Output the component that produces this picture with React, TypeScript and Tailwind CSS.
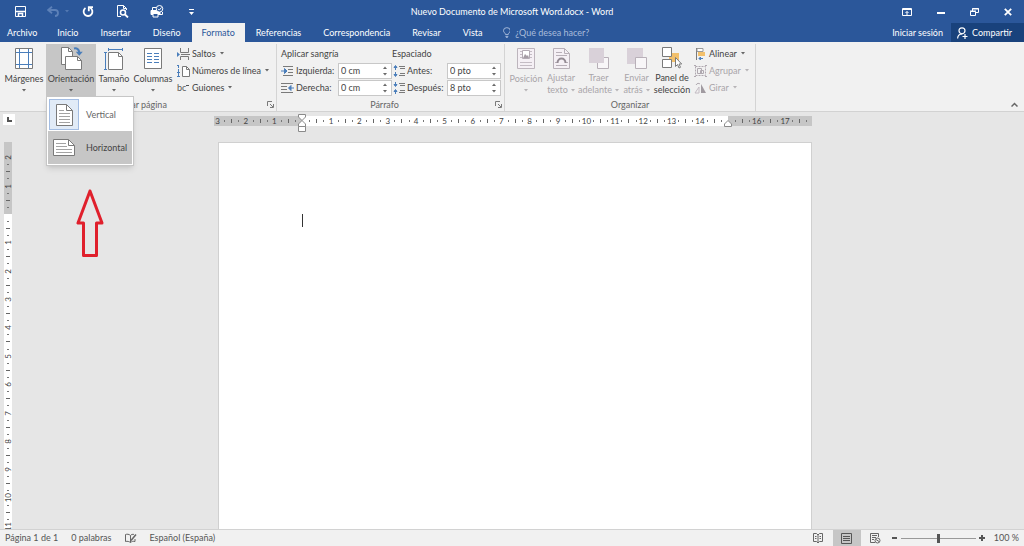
import type { ReactNode } from "react";

const GRAY = "#7a7a7a";
const BLUE = "#4a7ebb";

/* ---------- Ribbon icons ---------- */

const MarginsIcon = () => (
  <svg width="18" height="21" viewBox="0 0 18 21" fill="none">
    <path d="M.5.5h17v20H.5z" fill="#fff" stroke={GRAY} />
    <path d="M4.5 1v19M13.5 1v19M1 4.5h16M1 16.5h16" stroke={BLUE} />
  </svg>
);

const OrientationIcon = () => (
  <svg width="23" height="23" viewBox="0 0 23 23" fill="none">
    <path d="M1.5.5h7l4 4v13h-11z" fill="#fff" stroke={GRAY} />
    <path d="M8.5.5v4h4" stroke={GRAY} />
    <path d="M5.5 9.500h12l4 4v9h-16z" fill="#fff" stroke={GRAY} />
    <path d="M17.500 9.500v4h4" stroke={GRAY} />
    <path d="M14 1.500c3-.6 5 .8 5.400 4.500" stroke={BLUE} strokeWidth="2" />
    <path d="M15.800 4.800h7l-3.500 4z" fill={BLUE} />
  </svg>
);

const SizeIcon = () => (
  <svg width="20" height="22" viewBox="0 0 20 22" fill="none">
    <path d="M4.500 4.500h10l4 4v13h-14z" fill="#fff" stroke={GRAY} />
    <path d="M14.500 4.500v4h4" stroke={GRAY} />
    <path d="M1.500 4v18M0 4.500h3M0 21.500h3M4 1.500h15M4.500 0v3M18.500 0v3" stroke={BLUE} />
  </svg>
);

const ColumnsIcon = () => (
  <svg width="18" height="21" viewBox="0 0 18 21" fill="none">
    <path d="M.5.5h17v20H.5z" fill="#fff" stroke={GRAY} />
    <path
      d="M3 5.500h5M3 8.500h5M3 11.500h5M3 14.500h5M10 5.500h5M10 8.500h5M10 11.500h5M10 14.500h5"
      stroke={BLUE}
    />
  </svg>
);

const BreaksIcon = () => (
  <svg width="13" height="12" viewBox="0 0 13 12" fill="none">
    <path d="M3.500 0v4.500h8V0M3.500 12V8.500h8V12" stroke={GRAY} />
    <path d="M4 6.500h9" stroke={GRAY} />
    <path d="M0 4l3 2.500L0 9z" fill={BLUE} />
  </svg>
);

const LineNumbersIcon = () => (
  <svg width="13" height="12" viewBox="0 0 13 12" fill="none">
    <path d="M1.500 0v3M1.500 4v3M1.500 8v3M0 .5h1M0 11.500h3M0 7.500h3" stroke={BLUE} />
    <path d="M5.500 1.500h4l3 3v7h-7z" fill="#fff" stroke={GRAY} />
    <path d="M9.500 1.500v3h3" stroke={GRAY} />
  </svg>
);

const HyphenIcon = () => (
  <span aria-hidden className="flex w-[13px] items-center text-[9px] leading-3 text-[#555]">
    bc
    <span className="mb-[5px] h-px w-[3px] bg-[#555]" />
  </span>
);

const IndentIcon = ({ right = false }: { right?: boolean }) => (
  <svg width="13" height="12" viewBox="0 0 13 12" fill="none">
    <path
      d={right ? "M0 1.500h12M0 4.500h6M0 7.500h6M0 10.500h12" : "M2 1.500h10M7 4.500h5M7 7.500h5M2 10.500h10"}
      stroke={GRAY}
    />
    <path
      d={right ? "M13 6H8.500M10 3.500L7.500 6 10 8.500z" : "M0 6h4M3.500 3.500L6 6 3.500 8.500z"}
      fill={BLUE}
      stroke={BLUE}
    />
  </svg>
);

const SpacingIcon = ({ after = false }: { after?: boolean }) => (
  <svg width="12" height="12" viewBox="0 0 12 12" fill="none">
    <path d="M6 1.500h6M7 3.500h5M7 8.500h5M6 10.500h6" stroke={GRAY} />
    <path
      d={
        after
          ? "M2.500 0v2M2.500 12v-3M1 2.500h3l-1.500 2zM1 9.500h3l-1.500-2z"
          : "M2.500 5V2M2.500 7v3M1 2.500h3l-1.500-2zM1 9.500h3l-1.500 2z"
      }
      fill={BLUE}
      stroke={BLUE}
    />
  </svg>
);

const PositionIcon = () => (
  <svg width="18" height="21" viewBox="0 0 18 21" fill="none">
    <path d="M.5.5h17v20H.5z" fill="#f5f0f5" stroke="#bdb5bd" />
    <path d="M3 3.500h2M13 3.500h2M3 6.500h2M13 6.500h2M3 9.500h2M13 9.500h2M3 14.500h12M3 17.500h12" stroke="#c4bcc4" />
    <path d="M5.500 2.500h7v8h-7z" fill="#fff" stroke="#b3aab3" />
    <path d="M6 10l2-4 2 2 1-1 1 3z" fill="#a59ca5" />
  </svg>
);

const WrapIcon = () => (
  <svg width="17" height="21" viewBox="0 0 17 21" fill="none">
    <path d="M.5.5h11l5 5v15H.5z" fill="#f5f0f5" stroke="#b8b0b8" />
    <path d="M11.500.5v5h5" stroke="#b8b0b8" />
    <path d="M3 4.500h6M3 7.500h11M3 17.500h11M2 14.500h2M13 14.500h2" stroke="#b8b0b8" />
    <path d="M4.500 15c0-6 8-6 8 0" stroke="#948b94" strokeWidth="2" />
  </svg>
);

const BringForwardIcon = () => (
  <svg width="20" height="21" viewBox="0 0 20 21" fill="none">
    <path d="M8.500 9.500h11v11h-11z" fill="#f8f6f8" stroke="#b8b0b8" />
    <path d="M0 0h15v15H0z" fill="#d9d1d9" />
  </svg>
);

const SendBackwardIcon = () => (
  <svg width="20" height="21" viewBox="0 0 20 21" fill="none">
    <path d="M0 0h16v16H0z" fill="#d9d1d9" />
    <path d="M8.500 9.500h11v11h-11z" fill="#f8f6f8" stroke="#b8b0b8" />
  </svg>
);

const SelectionPaneIcon = () => (
  <svg width="20" height="22" viewBox="0 0 20 22" fill="none">
    <path d="M7 6h10v9H7z" fill="#f2c06c" />
    <path d="M.5.5h9v9h-9zM.5 12.500h9v8h-9z" fill="#fff" stroke={GRAY} />
    <path d="M13.500 10.500v9l2-2 1.500 3.500 1.500-.7-1.500-3.300h2.700z" fill="#fff" stroke={GRAY} />
  </svg>
);

const AlignIcon = () => (
  <svg width="13" height="12" viewBox="0 0 13 12" fill="none">
    <path d="M2.500 0v12" stroke={GRAY} />
    <path d="M3 .5h6v3H3z" stroke="#9a9a9a" fill="#fff" />
    <path d="M4 4h7v4H4z" fill="#f2c06c" />
    <path d="M9 10.500H5M6.500 9l-1.500 1.500L6.500 12z" stroke={BLUE} fill={BLUE} />
  </svg>
);

const GroupIcon = () => (
  <svg width="13" height="12" viewBox="0 0 13 12" fill="none" stroke="#b0a9b0">
    <path d="M1.500 1.500h10v9h-10z" strokeDasharray="2 1" />
    <path d="M3.500 3.500h4v5h-4zM6.500 5.500h3v3h-3z" />
    <path d="M0 .5h2M11 .5h2M0 11.500h2M11 11.500h2" />
  </svg>
);

const RotateIcon = () => (
  <svg width="13" height="12" viewBox="0 0 13 12" fill="none">
    <path d="M7 2v9h5z" fill="#a09aa0" />
    <path d="M5 5v6H1z" stroke="#c4bcc4" />
    <path d="M2 3c1-2 3-2 4-1" stroke="#b0a9b0" />
  </svg>
);

const LauncherIcon = () => (
  <svg width="7" height="7" viewBox="0 0 7 7" fill="none" stroke={GRAY}>
    <path d="M.5 5V.5H5M3 3l3 3M6.500 3v3.500H3" />
  </svg>
);

const PageGlyph = ({ landscape = false }: { landscape?: boolean }) =>
  landscape ? (
    <svg width="22" height="17" viewBox="0 0 22 17" fill="none" stroke={GRAY}>
      <path d="M.5.5h15l6 6v10H.5z" fill="#fff" />
      <path d="M15.500.5v6h6" />
      <path d="M3 4.500h10M3 7.500h11M3 10.500h16M3 13.500h16" stroke="#a3a3a3" />
    </svg>
  ) : (
    <svg width="17" height="22" viewBox="0 0 17 22" fill="none" stroke={GRAY}>
      <path d="M.5.5h10l6 6v15H.5z" fill="#fff" />
      <path d="M10.500.5v6h6" />
      <path d="M3 6.500h5M3 9.500h11M3 12.500h11M3 15.500h11M3 18.500h11" stroke="#a3a3a3" />
    </svg>
  );

const Caret = ({ className = "" }: { className?: string }) => (
  <svg width="4" height="3" viewBox="0 0 4 3" className={`shrink-0 opacity-80 ${className}`} aria-hidden>
    <path d="M0 0h4L2 2.500z" fill="currentColor" />
  </svg>
);

/* ---------- Title bar ---------- */

const TitleBar = () => (
  <header className="relative flex h-[23px] items-center justify-between text-white">
    <div className="flex items-center pl-[15px]">
      <button aria-label="Guardar">
        <svg width="11" height="11" viewBox="0 0 11 11" fill="none" stroke="#fff">
          <path d="M.5.5h10v10H.5z" />
          <path d="M1 5.500h9M3.500 10V7.500h4V10" strokeWidth="1.500" />
        </svg>
      </button>
      <button aria-label="Deshacer" className="ml-[21px] flex items-center gap-[6px] text-[#5d81b8]">
        <svg width="12" height="11" viewBox="0 0 12 11" fill="none" stroke="currentColor" strokeWidth="1.800">
          <path d="M5 .8L1.200 4 5 7.200M1.500 4H8c4 0 4 6 0 6" />
        </svg>
        <Caret />
      </button>
      <button aria-label="Rehacer" className="ml-[13px]">
        <svg width="12" height="12" viewBox="0 0 12 12" fill="none" stroke="#fff" strokeWidth="1.800">
          <path d="M3.500 2a4.400 4.400 0 1 0 4.700-.2" />
          <path d="M11 1.200H6.800v4" />
        </svg>
      </button>
      <button aria-label="Vista previa" className="ml-[23px]">
        <svg width="12" height="13" viewBox="0 0 12 13" fill="none" stroke="#fff">
          <path d="M4 11.500H.5V.5h6l3 3V5M6.500.5v3h3" />
          <circle cx="6" cy="7.500" r="2.500" strokeWidth="1.500" />
          <path d="M8 9.500l3 3" strokeWidth="1.800" />
        </svg>
      </button>
      <button aria-label="Impresión rápida" className="ml-[21px]">
        <svg width="14" height="13" viewBox="0 0 14 13" fill="none" stroke="#fff">
          <path d="M1 5.500h9v4H1z" fill="#fff" />
          <path d="M3 8.500h5v3.500H3z" fill="#2b579a" />
          <circle cx="9.500" cy="3.800" r="3.300" fill="#2b579a" />
          <path d="M2.500 5V2.500H6M8 3.800l1.300 1.300L11.500 2.500M12.500 7v2.500H10" />
        </svg>
      </button>
      <button aria-label="Personalizar barra" className="ml-[25px]">
        <svg width="5" height="6" viewBox="0 0 5 6" fill="#fff">
          <path d="M0 0h5v1H0zM0 3h5L2.500 6z" />
        </svg>
      </button>
    </div>
    <h1 className="pointer-events-none absolute inset-x-0 text-center text-[9px] leading-3">
      Nuevo Documento de Microsoft Word.docx - Word
    </h1>
    <div className="flex items-center gap-[25px] pr-3">
      <button aria-label="Opciones de la cinta">
        <svg width="10" height="8" viewBox="0 0 10 8" fill="none" stroke="#fff">
          <path d="M.5.5h9v7h-9zM1 1.500h8M5 7V3.500M3.500 5L5 3.500 6.500 5" />
        </svg>
      </button>
      <button aria-label="Minimizar">
        <svg width="8" height="8" viewBox="0 0 8 8" fill="#fff">
          <path d="M0 4h8v2H0z" />
        </svg>
      </button>
      <button aria-label="Restaurar">
        <svg width="9" height="8" viewBox="0 0 9 8" fill="none" stroke="#fff">
          <path d="M.5 3.500h5v4h-5zM0 3h6M2.500 3V.5h6v4H6M2 1h7" />
        </svg>
      </button>
      <button aria-label="Cerrar">
        <svg width="8" height="8" viewBox="0 0 8 8" fill="none" stroke="#fff" strokeWidth="1.800">
          <path d="M.8.8l6.400 6.400M7.200.8L.8 7.200" />
        </svg>
      </button>
    </div>
  </header>
);

/* ---------- Tabs ---------- */

const tabs = [
  "Inicio",
  "Insertar",
  "Diseño",
  "Formato",
  "Referencias",
  "Correspondencia",
  "Revisar",
  "Vista",
];

const TabBar = () => (
  <nav className="flex h-[19px] items-stretch text-white">
    <button className="pr-[9px] pl-[7px]">Archivo</button>
    {tabs.map((tab) => (
      <button
        key={tab}
        className={
          tab === "Formato"
            ? "bg-[#f1f1f1] px-[10px] text-[#2b579a]"
            : "px-[11px]"
        }
      >
        {tab}
      </button>
    ))}
    <label className="ml-[9px] flex min-w-0 flex-1 items-center gap-[5px] text-[#a9bcdb]">
      <svg width="8" height="11" viewBox="0 0 8 11" fill="none" stroke="currentColor">
        <path d="M2.500 7.500C2.500 6 .5 5.500.5 3.500a3.500 3 0 0 1 7 0c0 2-2 2.500-2 4zM2.500 9.500h3M3 10.500h2" />
      </svg>
      <input
        aria-label="¿Qué desea hacer?"
        placeholder="¿Qué desea hacer?"
        className="w-full min-w-0 bg-transparent outline-none placeholder:text-[#a9bcdb]"
      />
    </label>
    <button className="px-2">Iniciar sesión</button>
    <button className="flex items-center gap-1 bg-[#19427c] pr-3 pl-[6px]">
      <svg width="11" height="12" viewBox="0 0 11 12" fill="none" stroke="#fff" strokeWidth="1.200">
        <circle cx="5" cy="3.800" r="3" />
        <path d="M.6 11.500C.8 8.500 2.500 7 5 7M8 7v5M5.500 9.500h5" />
      </svg>
      Compartir
    </button>
  </nav>
);

/* ---------- Ribbon ---------- */

type BigButtonProps = {
  icon: ReactNode;
  lines: string[];
  width: string;
  disabled?: boolean;
  active?: boolean;
  caret?: boolean;
};

const BigButton = ({ icon, lines, width, disabled, active, caret = true }: BigButtonProps) => (
  <button
    disabled={disabled}
    className={`flex h-[52px] flex-col items-center whitespace-nowrap ${width} ${
      active ? "bg-[#c6c6c6]" : ""
    } ${disabled ? "text-[#a9a5a9]" : "text-[#444]"}`}
  >
    <span className="flex h-[29px] items-center justify-center">{icon}</span>
    <span className="leading-3">{lines[0]}</span>
    {lines[1] ? (
      <span className="flex items-center gap-[3px] leading-3">
        {lines[1]}
        {caret && <Caret />}
      </span>
    ) : (
      <Caret className="mt-1" />
    )}
  </button>
);

const SmallButton = ({ icon, label, disabled }: { icon: ReactNode; label: string; disabled?: boolean }) => (
  <button
    disabled={disabled}
    className={`flex h-[17px] items-center gap-[2px] whitespace-nowrap ${
      disabled ? "text-[#a9a5a9]" : "text-[#444]"
    }`}
  >
    {icon}
    <span>{label}</span>
    <Caret className="ml-[2px]" />
  </button>
);

const Group = ({ title, launcher, children }: { title: string; launcher?: boolean; children: ReactNode }) => (
  <section className="mt-[2px] flex shrink-0 flex-col border-r border-[#d4d4d4]">
    <div className="flex h-[52px]">{children}</div>
    <div
      className={`relative flex h-[15px] items-center justify-center pt-[2px] text-[#666] ${
        launcher ? "pr-3" : ""
      }`}
    >
      {title}
      {launcher && (
        <button aria-label={title} className="absolute right-[2px] bottom-[3px]">
          <LauncherIcon />
        </button>
      )}
    </div>
  </section>
);

type SpinnerProps = {
  id: string;
  value: string;
  label: string;
  icon: ReactNode;
  labelWidth: string;
};

const Spinner = ({ id, value, label, icon, labelWidth }: SpinnerProps) => (
  <div className="flex h-[17px] items-center">
    {icon}
    <label htmlFor={id} className={`pl-[2px] ${labelWidth}`}>
      {label}
    </label>
    <div className="flex h-4 w-[54px] items-center border border-[#c8c8c8] bg-white pr-1">
      <input id={id} defaultValue={value} className="w-full min-w-0 bg-transparent pl-[2px] outline-none" />
      <div className="flex flex-col gap-[4px] text-[#444]">
        <button aria-label={`Aumentar ${label}`}>
          <Caret className="rotate-180" />
        </button>
        <button aria-label={`Reducir ${label}`}>
          <Caret />
        </button>
      </div>
    </div>
  </div>
);

const OrientationMenu = () => (
  <div
    role="menu"
    className="absolute top-[52px] left-0 z-10 flex w-[88px] flex-col border border-[#c6c6c6] bg-white p-[1px] shadow-md"
  >
    <button role="menuitem" className="flex h-[33px] items-center gap-[7px] pl-[1px] text-[#666]">
      <span className="flex h-[31px] w-[30px] items-center justify-center border border-[#a3bde3] bg-[#e1ebf7]">
        <PageGlyph />
      </span>
      Vertical
    </button>
    <button role="menuitem" className="flex h-[33px] items-center gap-[7px] bg-[#c6c6c6] pl-[1px] text-[#444]">
      <span className="flex w-[30px] items-center justify-center">
        <PageGlyph landscape />
      </span>
      Horizontal
    </button>
  </div>
);

const Ribbon = () => (
  <div className="flex h-[70px] border-b border-[#d2d2d2] bg-[#f1f1f1] text-[#444]">
    <Group title="Configurar página" launcher>
      <div className="flex w-[276px] pl-[2px]">
        <BigButton icon={<MarginsIcon />} lines={["Márgenes"]} width="w-[44px]" />
        <div className="relative">
          <BigButton icon={<OrientationIcon />} lines={["Orientación"]} width="w-[50px]" active />
          <OrientationMenu />
        </div>
        <BigButton icon={<SizeIcon />} lines={["Tamaño"]} width="w-[36px]" />
        <BigButton icon={<ColumnsIcon />} lines={["Columnas"]} width="w-[42px]" />
        <div className="ml-[3px] flex flex-col pt-[1px]">
          <SmallButton icon={<BreaksIcon />} label="Saltos" />
          <SmallButton icon={<LineNumbersIcon />} label="Números de línea" />
          <SmallButton icon={<HyphenIcon />} label="Guiones" />
        </div>
      </div>
    </Group>
    <Group title="Párrafo" launcher>
      <div className="flex w-[227px] pt-[1px] pl-1">
        <div className="w-[111px]">
          <div className="h-[17px] leading-[17px]">Aplicar sangría</div>
          <Spinner id="left" label="Izquierda:" value="0 cm" icon={<IndentIcon />} labelWidth="w-[44px]" />
          <Spinner id="right" label="Derecha:" value="0 cm" icon={<IndentIcon right />} labelWidth="w-[44px]" />
        </div>
        <div>
          <div className="h-[17px] leading-[17px]">Espaciado</div>
          <div className="pl-[1px]">
            <Spinner id="before" label="Antes:" value="0 pto" icon={<SpacingIcon />} labelWidth="w-[42px]" />
            <Spinner id="after" label="Después:" value="8 pto" icon={<SpacingIcon after />} labelWidth="w-[42px]" />
          </div>
        </div>
      </div>
    </Group>
    <Group title="Organizar">
      <div className="flex w-[250px] pl-[2px]">
        <BigButton icon={<PositionIcon />} lines={["Posición"]} width="w-[38px]" disabled />
        <BigButton icon={<WrapIcon />} lines={["Ajustar", "texto"]} width="w-[32px]" disabled />
        <BigButton icon={<BringForwardIcon />} lines={["Traer", "adelante"]} width="w-[43px]" disabled />
        <BigButton icon={<SendBackwardIcon />} lines={["Enviar", "atrás"]} width="w-[33px]" disabled />
        <BigButton icon={<SelectionPaneIcon />} lines={["Panel de", "selección"]} width="w-[38px]" caret={false} />
        <div className="ml-[3px] flex flex-col pt-[1px]">
          <SmallButton icon={<AlignIcon />} label="Alinear" />
          <SmallButton icon={<GroupIcon />} label="Agrupar" disabled />
          <SmallButton icon={<RotateIcon />} label="Girar" disabled />
        </div>
      </div>
    </Group>
    <button aria-label="Contraer la cinta" className="mt-auto mr-[6px] mb-1 ml-auto">
      <svg width="7" height="5" viewBox="0 0 7 5" fill="none" stroke="#666" strokeWidth="1.500">
        <path d="M.5 4.500l3-3 3 3" />
      </svg>
    </button>
  </div>
);

/* ---------- Rulers ---------- */

// Four marks per centimetre: number, dot, tick, dot
const rulerMarks = (from: number, count: number) =>
  Array.from({ length: count }, (_, i) => {
    const quarter = from * 4 + i;
    const part = ((quarter % 4) + 4) % 4;
    if (part === 0) return String(Math.abs(quarter / 4));
    return part === 2 ? "tick" : "dot";
  });

const Mark = ({ mark, vertical = false }: { mark: string; vertical?: boolean }) => {
  if (mark === "tick") return <span className={vertical ? "h-px w-1 bg-[#666]" : "h-1 w-px bg-[#666]"} />;
  if (mark === "dot") return <span className={vertical ? "h-px w-[2px] bg-[#777]" : "h-[2px] w-px bg-[#777]"} />;
  if (mark === "0" || mark === "15") return null;
  return (
    <span className={vertical ? "rotate-180 [writing-mode:vertical-rl]" : ""}>{mark}</span>
  );
};

const HorizontalRuler = () => (
  <div className="relative h-[10px] bg-[linear-gradient(to_right,#c6c6c6_88px,#fff_88px,#fff_514px,#c6c6c6_514px)]">
    <div className="flex h-full w-[596px] text-[8px] leading-[10px] text-[#444]">
      {rulerMarks(-3, 84).map((mark, i) => (
        <span key={i} className="flex min-w-0 flex-1 basis-0 items-center justify-center">
          <Mark mark={mark} />
        </span>
      ))}
    </div>
    <svg width="8" height="18" viewBox="0 0 8 18" fill="#fff" stroke="#8a8a8a" className="absolute -top-[2px] left-[84px]">
      <path d="M.5.5h7V3L4 6.500.5 3zM.5 12.500V10L4 6.500 7.500 10v2.500zM.5 12.500h7v5h-7z" />
    </svg>
    <svg width="8" height="7" viewBox="0 0 8 7" fill="#fff" stroke="#8a8a8a" className="absolute top-1 left-[510px]">
      <path d="M.5 6.500V4L4 .5 7.500 4v2.500z" />
    </svg>
  </div>
);

const VerticalRuler = () => (
  <div className="mt-[17px] ml-1 w-2 flex-1 overflow-hidden bg-[linear-gradient(to_bottom,#c6c6c6_72px,#fff_72px)] pt-3">
    <div className="flex h-[376px] flex-col text-[8px] leading-2 text-[#444]">
      {rulerMarks(-2, 53).map((mark, i) => (
        <span key={i} className="flex min-h-0 flex-1 basis-0 items-center justify-center">
          <Mark mark={mark} vertical />
        </span>
      ))}
    </div>
  </div>
);

/* ---------- Document area ---------- */

const DocumentArea = () => (
  <main className="relative flex min-h-0 flex-1 overflow-hidden bg-[#e6e6e6]">
    <div className="flex w-4 flex-col">
      <button
        aria-label="Tabulación izquierda"
        className="mt-[2px] ml-[3px] flex h-[11px] w-3 items-center justify-center bg-white"
      >
        <svg width="5" height="5" viewBox="0 0 5 5" fill="none" stroke="#555" strokeWidth="2">
          <path d="M1 0v4h4" />
        </svg>
      </button>
      <VerticalRuler />
    </div>
    <div className="flex flex-1 justify-center pt-1 pr-[14px]">
      <div className="flex w-[598px] flex-col">
        <HorizontalRuler />
        <article className="mt-4 ml-1 flex-1 border border-b-0 border-[#d0d0d0] bg-white pt-[71px] pl-[83px]">
          <div className="h-[13px] w-px bg-[#333]" />
        </article>
      </div>
    </div>
    <svg width="28" height="70" viewBox="0 0 28 70" fill="none" className="absolute top-[77px] left-[76px]">
      <path
        d="M14 2L2 34h5.500v32.500h13V34H26z"
        stroke="#e0202c"
        strokeWidth="3"
        strokeLinejoin="round"
      />
    </svg>
  </main>
);

/* ---------- Status bar ---------- */

const StatusBar = () => (
  <footer className="flex h-[17px] items-stretch border-t border-[#d2d2d2] bg-[#f1f1f1] text-[#555]">
    <button className="pl-[5px]">Página 1 de 1</button>
    <button className="ml-[13px]">0 palabras</button>
    <button aria-label="Revisión" className="ml-[14px]">
      <svg width="12" height="11" viewBox="0 0 12 11" fill="none" stroke="#666">
        <path d="M5.500 2.500v7M5.500 2.500C4 1 2 1 .5 1.500v7c2-.5 3.500 0 5 1 1-1 3-1.500 4.500-1V6M5.500 2.500C6 1.500 8 1 9 1.500" />
        <path d="M6 7.500l5-6" strokeWidth="1.500" />
      </svg>
    </button>
    <button className="ml-[12px]">Español (España)</button>
    <div className="ml-auto flex items-stretch">
      <button aria-label="Modo de lectura" className="px-[10px]">
        <svg width="10" height="10" viewBox="0 0 10 10" fill="none" stroke="#666">
          <path d="M.5.5h3L5 2 6.500.5h3v8h-3L5 10 3.500 8.500h-3zM5 2v7M2 3.500h1.500M2 5.500h1.500M6.500 3.500H8M6.500 5.500H8" />
        </svg>
      </button>
      <button aria-label="Diseño de impresión" className="flex w-[28px] items-center justify-center bg-[#c6c6c6]">
        <svg width="11" height="11" viewBox="0 0 11 11" fill="none" stroke="#555">
          <path d="M.5.5h10v10H.5zM2 3.500h7M2 5.500h7M2 7.500h7" />
        </svg>
      </button>
      <button aria-label="Diseño web" className="px-[9px]">
        <svg width="11" height="11" viewBox="0 0 11 11" fill="none" stroke="#666">
          <path d="M5 9.500H.5V.5h8V4M2 2.500h5M2 4.500h4M2 6.500h2" />
          <circle cx="7.500" cy="7.500" r="2.500" />
          <path d="M6 6.500l3 2" />
        </svg>
      </button>
      <button aria-label="Alejar" className="ml-[2px]">
        <svg width="6" height="6" viewBox="0 0 6 6" fill="#555">
          <path d="M0 2h5v2H0z" />
        </svg>
      </button>
      <input
        type="range"
        aria-label="Zoom"
        min={10}
        max={190}
        defaultValue={100}
        className="mx-[3px] w-[75px] appearance-none bg-[linear-gradient(#999,#999)] bg-[length:100%_1px] bg-center bg-no-repeat [&::-webkit-slider-thumb]:h-[9px] [&::-webkit-slider-thumb]:w-[3px] [&::-webkit-slider-thumb]:appearance-none [&::-webkit-slider-thumb]:bg-[#555]"
      />
      <button aria-label="Acercar">
        <svg width="6" height="6" viewBox="0 0 6 6" fill="#555">
          <path d="M2 0h2v2h2v2H4v2H2V4H0V2h2z" />
        </svg>
      </button>
      <span className="flex items-center pr-[5px] pl-[9px]">100 %</span>
    </div>
  </footer>
);

const App = () => (
  <div className="flex h-screen flex-col overflow-hidden bg-[#2b579a] font-['Lato','Open_Sans',sans-serif] text-[9px] leading-3">
    <TitleBar />
    <TabBar />
    <Ribbon />
    <DocumentArea />
    <StatusBar />
  </div>
);

export default App;
